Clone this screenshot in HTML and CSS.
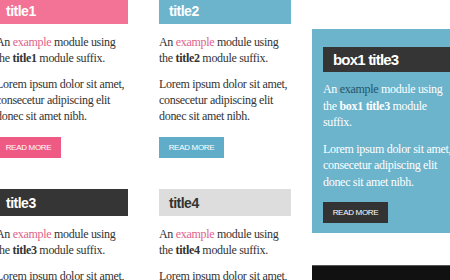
FILE: index.html
```html
<!DOCTYPE html>
<html>
<head>
    <title>Module Suffixes</title>
    <link rel="stylesheet" href="styles.css">
</head>
<body>
    <div class="grid">
        <div class="module">
            <h3 class="module-title title1">title1</h3>
            <p>An <a href="#">example</a> module using<br>the <b>title1</b> module suffix.</p>
            <p>Lorem ipsum dolor sit amet,<br>consecetur adipiscing elit<br>donec sit amet nibh.</p>
            <a href="#" class="btn btn-pink">READ MORE</a>
        </div>
        <div class="module">
            <h3 class="module-title title2">title2</h3>
            <p>An <a href="#">example</a> module using<br>the <b>title2</b> module suffix.</p>
            <p>Lorem ipsum dolor sit amet,<br>consecetur adipiscing elit<br>donec sit amet nibh.</p>
            <a href="#" class="btn btn-blue">READ MORE</a>
        </div>
        <div class="side">
            <div class="module box1">
                <h3 class="module-title title3">box1 title3</h3>
                <p>An <a href="#">example</a> module using<br>the <b>box1 title3</b> module<br>suffix.</p>
                <p>Lorem ipsum dolor sit amet,<br>consecetur adipiscing elit<br>donec sit amet nibh.</p>
                <a href="#" class="btn btn-dark">READ MORE</a>
            </div>
            <div class="black-bar"></div>
        </div>
        <div class="module">
            <h3 class="module-title title3">title3</h3>
            <p>An <a href="#">example</a> module using<br>the <b>title3</b> module suffix.</p>
            <p>Lorem ipsum dolor sit amet,<br>consecetur adipiscing elit<br>donec sit amet nibh.</p>
        </div>
        <div class="module">
            <h3 class="module-title title4">title4</h3>
            <p>An <a href="#">example</a> module using<br>the <b>title4</b> module suffix.</p>
            <p>Lorem ipsum dolor sit amet,<br>consecetur adipiscing elit<br>donec sit amet nibh.</p>
        </div>
    </div>
</body>
</html>
```

FILE: styles.css
```css
body {
    margin: 0;
    padding: 0;
    background-color: #ffffff;
    font-family: "Liberation Serif", serif;
    color: #333;
    overflow: hidden;
}

.grid {
    display: grid;
    grid-template-columns: 132px 132px 150px;
    grid-template-rows: 192px auto;
    column-gap: 31px;
    margin-top: -3px;
    margin-left: -4px;
}

.module {
    font-size: 12px;
    line-height: 16px;
    letter-spacing: -0.3px;
    white-space: nowrap;
}

.module p {
    margin: 0 0 10px 0;
}

.module a {
    color: #e0628a;
    text-decoration: none;
}

.module-title {
    margin: 0 0 10px 0;
    height: 27px;
    line-height: 28px;
    padding: 0 10px;
    font-family: "Liberation Sans", sans-serif;
    font-size: 14px;
    font-weight: bold;
    letter-spacing: -0.5px;
    color: #fff;
}

.title1 {
    background-color: #f27396;
}

.title2 {
    background-color: #6cb3cc;
}

.title3 {
    background-color: #353535;
}

.title4 {
    background-color: #dddddd;
    color: #333;
}

.btn {
    display: inline-block;
    width: 65px;
    height: 21px;
    line-height: 22px;
    margin-top: 3px;
    text-align: center;
    font-family: "Liberation Sans", sans-serif;
    font-size: 8px;
    letter-spacing: -0.3px;
}

.module a.btn {
    color: #fff;
}

.btn-pink {
    background-color: #ef5a85;
}

.btn-blue {
    background-color: #5fadc8;
}

.btn-dark {
    background-color: #333;
}

.side {
    grid-row: 1 / span 2;
    grid-column: 3;
    margin-left: -10px;
    padding-top: 32px;
}

.box1 {
    background-color: #6cb3cc;
    padding: 18px 0 10px 11px;
    color: #fff;
}

.box1 .module-title {
    height: 25px;
    line-height: 26px;
    margin-bottom: 9px;
    font-size: 15px;
    letter-spacing: -0.8px;
}

.box1 p {
    line-height: 16.5px;
}

.box1 a {
    color: #26566a;
}

.box1 .btn {
    margin-top: 2px;
}

.black-bar {
    background-color: #111;
    border-top: 1px solid #555;
    height: 20px;
    margin-top: 32px;
}
```
